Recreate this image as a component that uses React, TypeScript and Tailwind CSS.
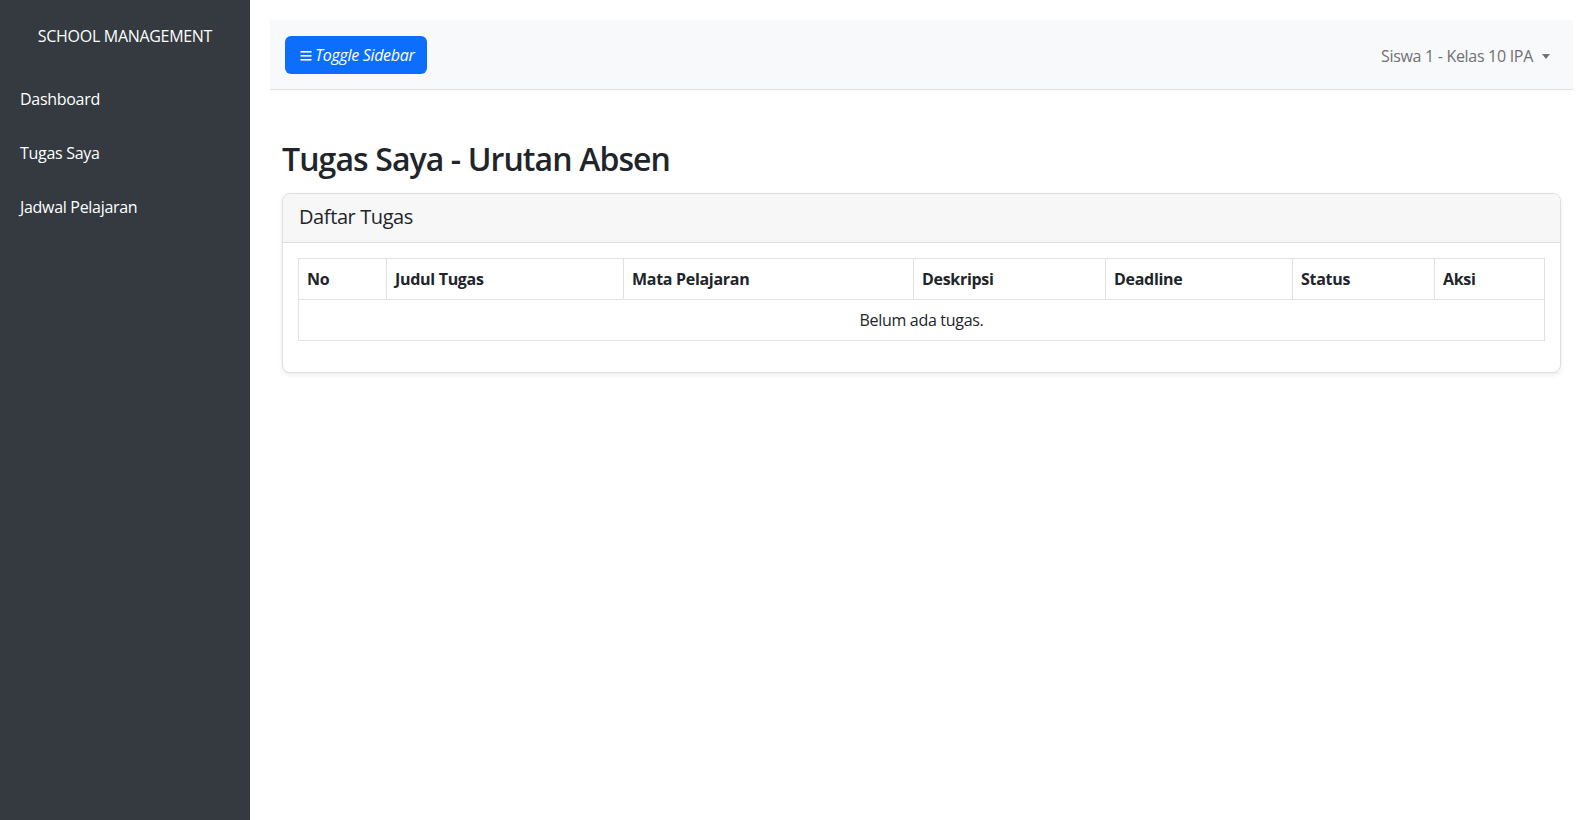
import React from "react";

// Menu sidebar
const menuItems = ["Dashboard", "Tugas Saya", "Jadwal Pelajaran"];

// Kolom tabel tugas (lebar dalam px)
const columns = [
  { label: "No", width: "w-[88px]" },
  { label: "Judul Tugas", width: "w-[237px]" },
  { label: "Mata Pelajaran", width: "w-[290px]" },
  { label: "Deskripsi", width: "w-[192px]" },
  { label: "Deadline", width: "w-[187px]" },
  { label: "Status", width: "w-[142px]" },
  { label: "Aksi", width: "w-[110px]" },
];

function Sidebar() {
  return (
    <aside className="w-[250px] shrink-0 min-h-screen bg-[#343a40] text-white">
      <div className="h-[72px] flex items-center justify-center text-[16px] tracking-[-0.3px]">SCHOOL MANAGEMENT</div>
      <ul>
        {menuItems.map((item) => (
          <li key={item}>
            <a href="#" className="block px-[20px] py-[15px] text-[16px] leading-[24px] text-white">
              {item}
            </a>
          </li>
        ))}
      </ul>
    </aside>
  );
}

function Navbar() {
  return (
    <nav className="h-[70px] bg-[#f8f9fa] border-b border-[#dee2e6] flex items-center justify-between pl-[15px] pr-[23px]">
      <button className="h-[38px] pl-[15px] pr-[12px] bg-[#0d6efd] text-white rounded-[6px] flex items-center gap-[3px] italic text-[16px]">
        <svg width="12" height="11" viewBox="0 0 12 11" className="mt-[1px]">
          <rect x="0.5" y="1" width="11" height="1.6" fill="currentColor" />
          <rect x="0.5" y="5" width="11" height="1.6" fill="currentColor" />
          <rect x="0.5" y="9" width="11" height="1.6" fill="currentColor" />
        </svg>
        Toggle Sidebar
      </button>
      <a href="#" className="flex items-center text-[16px] text-[#6f7173] mt-[3px]">
        Siswa 1 - Kelas 10 IPA
        <span className="ml-[9px] border-t-[5px] border-x-[4.5px] border-t-[#6f7173] border-x-transparent" />
      </a>
    </nav>
  );
}

export default function App() {
  return (
    <div className="flex min-h-screen bg-white text-[#212529] font-['Open_Sans',sans-serif] tracking-[-0.3px]">
      <Sidebar />
      <main className="flex-1 pl-[20px] pr-[12px] pt-[20px]">
        <Navbar />
        <div className="px-[12px]">
          <h2 className="mt-[50px] mb-[15px] text-[32px] leading-[38px] font-semibold tracking-[-0.9px]">Tugas Saya - Urutan Absen</h2>
          <div className="border border-[#dfdfdf] rounded-[8px] bg-white shadow-[0_2px_5px_rgba(0,0,0,0.08)] overflow-hidden">
            <div className="bg-[#f7f7f7] border-b border-[#dfdfdf] px-[16px] pt-[11px] pb-[13px]">
              <h5 className="text-[20px] leading-[24px] font-medium tracking-[-0.4px]">Daftar Tugas</h5>
            </div>
            <div className="px-[15px] pt-[15px] pb-[31px]">
              <table className="w-full table-fixed border-collapse text-[16px]">
                <thead>
                  <tr>
                    {columns.map((col) => (
                      <th key={col.label} className={`${col.width} border border-[#dee2e6] px-[8px] py-[8px] leading-[24px] text-left font-bold`}>
                        {col.label}
                      </th>
                    ))}
                  </tr>
                </thead>
                <tbody>
                  <tr>
                    <td colSpan={7} className="border border-[#dee2e6] px-[8px] py-[8px] leading-[24px] text-center">
                      Belum ada tugas.
                    </td>
                  </tr>
                </tbody>
              </table>
            </div>
          </div>
        </div>
      </main>
    </div>
  );
}
